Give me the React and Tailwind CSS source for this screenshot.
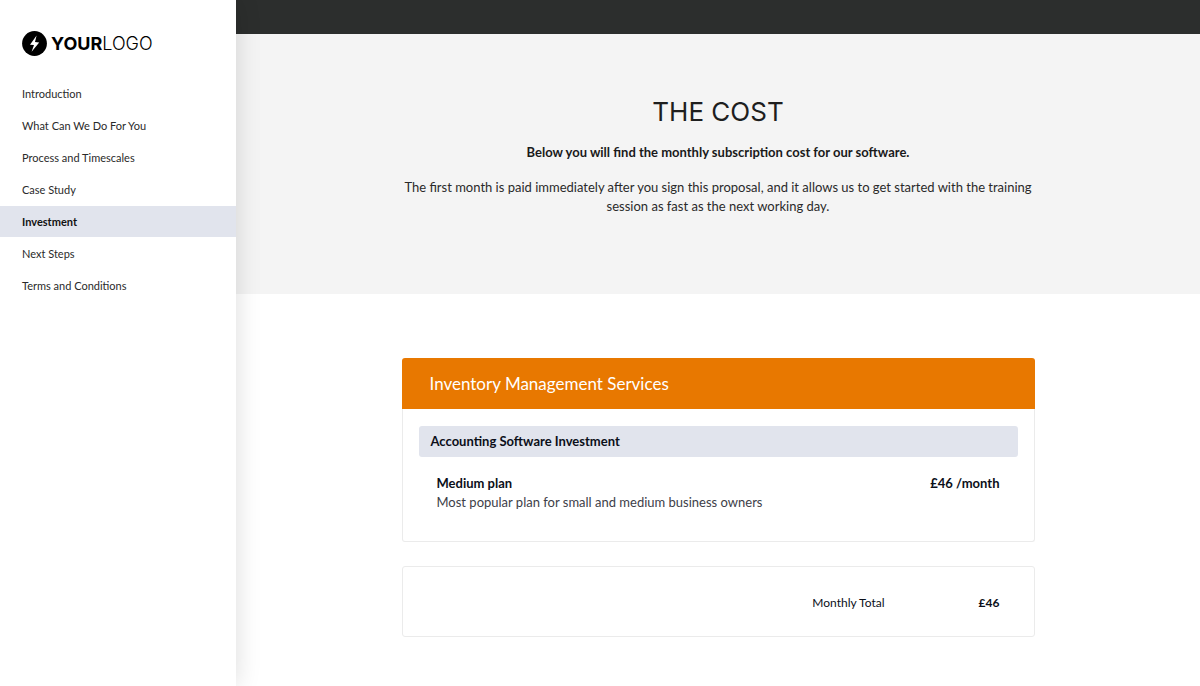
import { useState } from 'react';

const sections = [
    'Introduction',
    'What Can We Do For You',
    'Process and Timescales',
    'Case Study',
    'Investment',
    'Next Steps',
    'Terms and Conditions',
];

const slug = (title) => title.toLowerCase().replace(/ /g, '-');

const Logo = () => (
    <a href="#introduction" className="flex items-center gap-1 px-[22px] text-black">
        <svg viewBox="0 0 25 25" className="size-[25px]" aria-hidden="true">
            <circle cx="12.5" cy="12.5" r="12.4" fill="#000" />
            <path d="M14.6 4.6 8 13.7l4 .3-2.4 6.8 7.6-9.4-4.2-.3z" fill="#fff" />
        </svg>
        <span className="font-['Inter',sans-serif] text-[18px] leading-6">
            <span className="font-bold">YOUR</span>
            <span className="font-light">LOGO</span>
        </span>
    </a>
);

const Sidebar = ({ active, onSelect }) => (
    <aside className="relative z-10 w-[236px] shrink-0 bg-white pt-[31px] shadow-[0_0_24px_rgba(0,0,0,0.14)]">
        <Logo />
        <nav className="mt-[22px] flex flex-col gap-px">
            {sections.map((title) => (
                <a
                    key={title}
                    href={`#${slug(title)}`}
                    onClick={() => onSelect(title)}
                    className={`px-[22px] text-[11px] leading-[31px] ${
                        title === active ? 'bg-[#e1e4ed] font-bold text-[#111111]' : 'text-[#2a2a2a]'
                    }`}
                >
                    {title}
                </a>
            ))}
        </nav>
    </aside>
);

const Hero = () => (
    <header className="bg-[#f4f4f4] px-8 pt-[60px] pb-[78px] text-center">
        <h1 className="font-['Inter',sans-serif] text-[26px] leading-9 font-normal text-[#1e1e1e]">THE COST</h1>
        <div className="mx-auto mt-[13px] max-w-[633px] text-[13px] leading-[19px] text-[#2a2a2a]">
            <p className="font-bold text-[#1a1a1a]">Below you will find the monthly subscription cost for our software.</p>
            <p className="mt-4">
                The first month is paid immediately after you sign this proposal, and it allows us to get started with the training
                session as fast as the next working day.
            </p>
        </div>
    </header>
);

const Pricing = () => (
    <section className="mx-auto mt-16 w-full max-w-[633px] text-[13px] leading-[19px] text-[#0b0f19]">
        <h2 className="rounded-t-[3px] bg-[#e87800] px-7 text-[17px] leading-[51px] text-white">Inventory Management Services</h2>
        <div className="rounded-b-[3px] border border-t-0 border-[#ebebeb] px-4 pt-[17px] pb-[29px]">
            <h3 className="rounded-[3px] bg-[#e1e4ed] px-3 leading-[31px] font-bold">Accounting Software Investment</h3>
            <div className="mt-[17px] flex justify-between px-[18px]">
                <div>
                    <p className="font-bold">Medium plan</p>
                    <p className="text-[#3d4048]">Most popular plan for small and medium business owners</p>
                </div>
                <p className="font-bold">£46 /month</p>
            </div>
        </div>

        <div className="mt-6 flex justify-end rounded-[3px] border border-[#ebebeb] px-[34px] pt-[26px] pb-6 text-[12px]">
            <p>Monthly Total</p>
            <p className="w-[115px] text-right font-bold">£46</p>
        </div>
    </section>
);

const App = () => {
    const [active, setActive] = useState('Investment');

    return (
        <div className="flex min-h-screen bg-white font-['Lato',sans-serif]">
            <Sidebar active={active} onSelect={setActive} />
            <main className="min-w-0 flex-1">
                <div className="h-[34px] bg-[#2c2e2d]" />
                <Hero />
                <Pricing />
            </main>
        </div>
    );
};

export default App;
